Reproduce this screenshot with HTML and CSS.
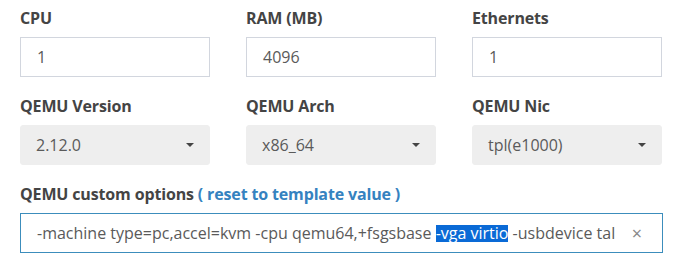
FILE: index.html
```html
<!DOCTYPE html>
<html lang="en">
	<head>
		<title>VM settings</title>
		<meta charset="UTF-8">
		<meta content="width=device-width,initial-scale=1.0" name="viewport">
		<link rel="stylesheet" href="styles.css">
	</head>
	<body>
		<div id="vmForm">
			<div class="row">
				<div class="field">
					<label>CPU</label>
					<div class="box">1</div>
				</div>
				<div class="field">
					<label>RAM (MB)</label>
					<div class="box">4096</div>
				</div>
				<div class="field">
					<label>Ethernets</label>
					<div class="box">1</div>
				</div>
			</div>
			<div class="row">
				<div class="field">
					<label>QEMU Version</label>
					<div class="box select">2.12.0<span class="caret"></span></div>
				</div>
				<div class="field">
					<label>QEMU Arch</label>
					<div class="box select">x86_64<span class="caret"></span></div>
				</div>
				<div class="field">
					<label>QEMU Nic</label>
					<div class="box select">tpl(e1000)<span class="caret"></span></div>
				</div>
			</div>
			<div class="wide">
				<label>QEMU custom options <a href="#">( reset to template value )</a></label>
				<div class="box focus"><span class="val">-machine type=pc,accel=kvm -cpu qemu64,+fsgsbase <span class="sel">-vga virtio</span> -usbdevice tal</span><span class="clear">&times;</span></div>
			</div>
		</div>
	</body>
</html>
```

FILE: styles.css
```css
body{margin:0;font-family:"Open Sans",sans-serif;color:#555;}
#vmForm{padding:8px 22px 0 20px;}
.row{display:flex;gap:36px;margin-bottom:19px;}
.field{width:190px;}
label{display:block;font-weight:bold;font-size:16px;color:#444;height:20px;line-height:20px;margin-bottom:9px;letter-spacing:-0.15px;}
label a{color:#3582c0;text-decoration:none;}
.box{box-sizing:border-box;height:40px;border:1px solid #d2d6de;padding:0 16px;font-size:16px;line-height:38px;color:#5a5a5a;display:flex;align-items:center;}
.select{background:#eee;border-color:#eee;border-radius:3px;padding:0 15px;}
.caret{margin-left:auto;width:0;height:0;border-left:4px solid transparent;border-right:4px solid transparent;border-top:4px solid #444;}
.wide{width:643px;margin-top:2px;}
.focus{border-color:#3c8dbc;}
.val{white-space:nowrap;overflow:hidden;}
.sel{display:inline-block;line-height:17px;background:#0a6ad6;color:#fff;}
.clear{margin-left:auto;color:#888;font-size:18px;padding-right:4px;}
```
